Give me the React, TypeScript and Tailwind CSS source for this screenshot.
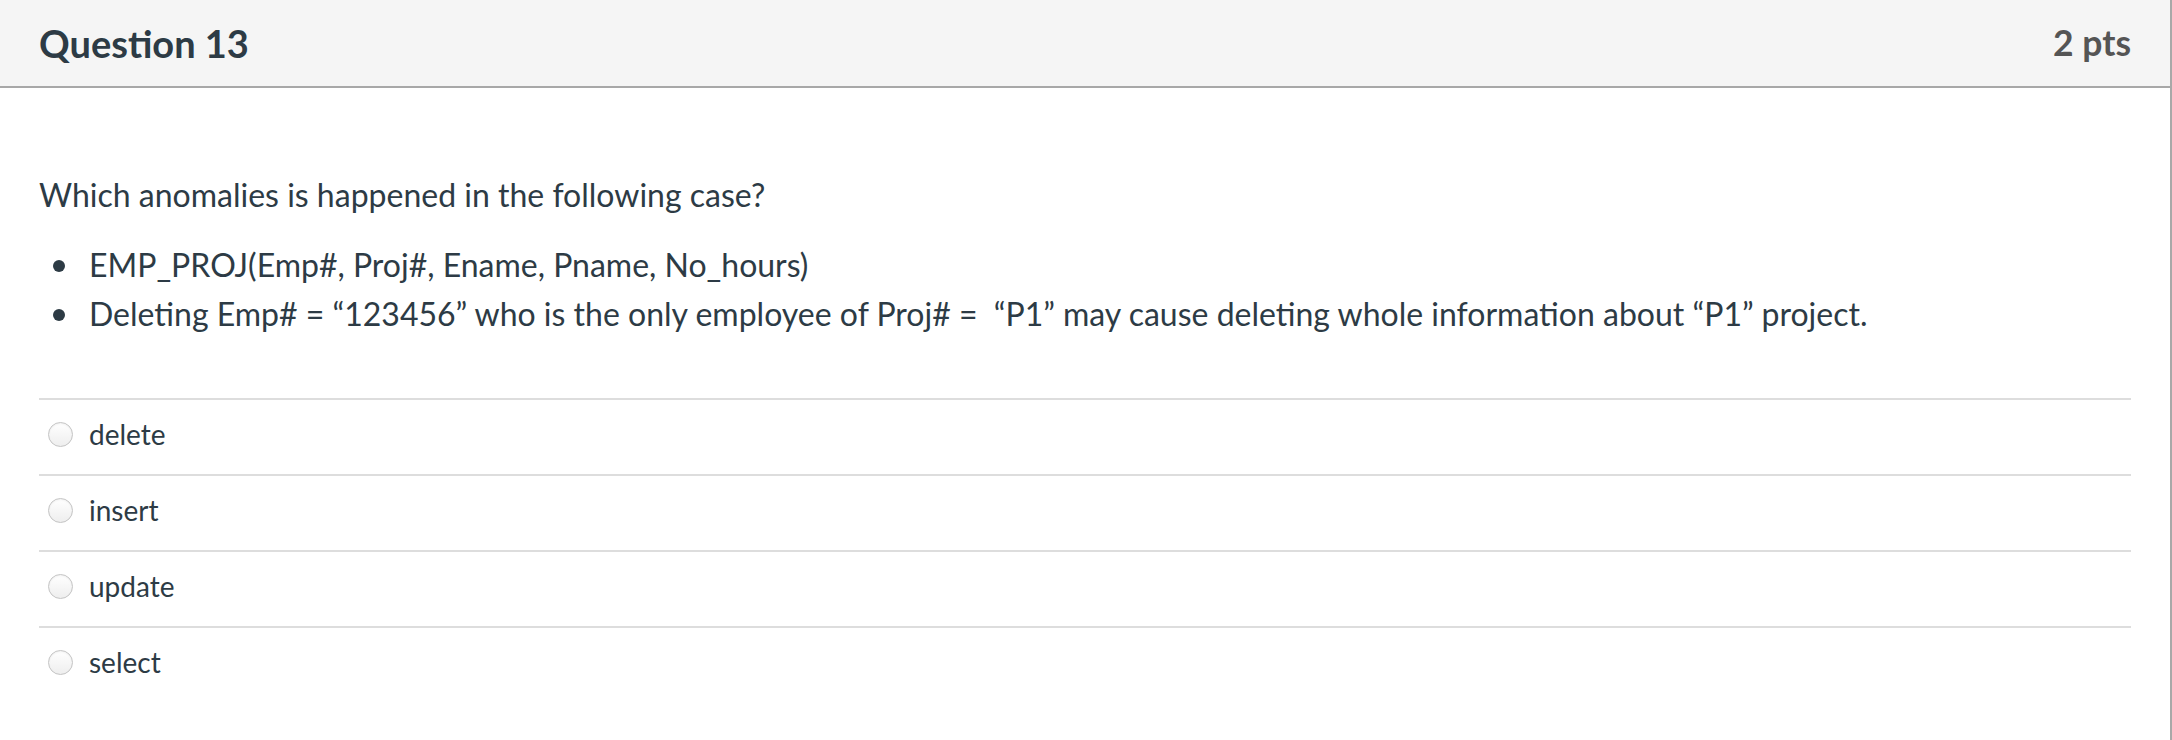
const answers = ["delete", "insert", "update", "select"];

export default function App() {
  return (
    <div
      className="h-[740px] w-[2172px] overflow-hidden bg-white text-[#2d3b45]"
      style={{ fontFamily: "Lato, 'Open Sans', sans-serif" }}
    >
      <div className="h-full border-r-2 border-[#a8a8a8]">
        {/* header bar */}
        <div className="flex h-[88px] items-center justify-between border-b-2 border-[#a8a8a8] bg-[#f5f5f5] px-[39px]">
          <h2 className="text-[38px] font-bold leading-none">Question 13</h2>
          <div className="text-[35.5px] font-bold leading-none text-[#555555]">2 pts</div>
        </div>

        <div className="px-[39px]">
          <p className="mt-[82px] text-[32px] leading-[49px]">
            Which anomalies is happened in the following case?
          </p>
          <ul className="mt-[21px] text-[32px] leading-[49px]">
            <li className="flex items-center">
              <span className="ml-[14px] mr-[24px] mt-[2px] h-[12px] w-[12px] rounded-full bg-[#2d3b45]" />
              EMP_PROJ(Emp#, Proj#, Ename, Pname, No_hours)
            </li>
            <li className="flex items-center">
              <span className="ml-[14px] mr-[24px] mt-[2px] h-[12px] w-[12px] rounded-full bg-[#2d3b45]" />
              Deleting Emp# = “123456” who is the only employee of Proj# = &nbsp;“P1” may cause deleting whole
              information about “P1” project.
            </li>
          </ul>

          <div className="mt-[60px]">
            {answers.map((a) => (
              <div key={a} className="flex h-[76px] items-center border-t-2 border-[#dddddd] pb-[6px]">
                <span className="ml-[9px] mr-[16px] h-[25px] w-[25px] rounded-full border border-[#c4c4c4] bg-gradient-to-b from-white to-[#eeeeee] shadow-[inset_0_1px_2px_rgba(0,0,0,0.06)]" />
                <span className="text-[28px]">{a}</span>
              </div>
            ))}
          </div>
        </div>
      </div>
    </div>
  );
}
